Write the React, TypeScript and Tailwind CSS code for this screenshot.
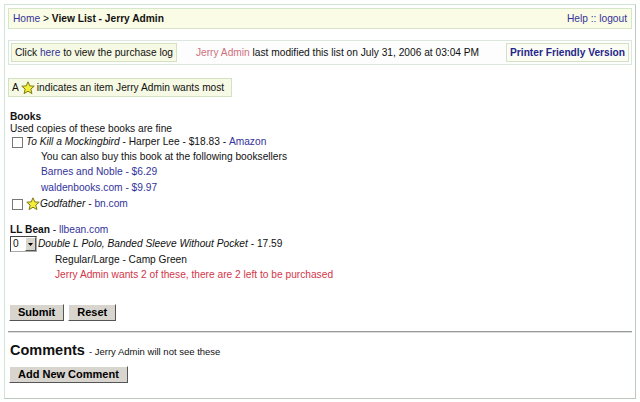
import React from "react";

function Star() {
  return (
    <svg width="14" height="14" viewBox="0 0 14 14" className="inline-block shrink-0">
      <path
        d="M7 0.8 L8.8 4.9 L13.2 5.2 L9.8 8.1 L10.9 12.6 L7 10.2 L3.1 12.6 L4.2 8.1 L0.8 5.2 L5.2 4.9 Z"
        fill="#f4ee3a"
        stroke="#7a7a10"
        strokeWidth="1"
        strokeLinejoin="round"
      />
    </svg>
  );
}

function Checkbox() {
  return <span className="inline-block w-[11px] h-[11px] border border-[#777] bg-white mr-[3px] shrink-0" />;
}

function Btn({ children }: { children: React.ReactNode }) {
  return (
    <button className="h-[17px] px-[8px] bg-[#d8d5cf] border border-t-white border-l-white border-r-[#555] border-b-[#555] font-bold text-[11px] leading-none text-black">
      {children}
    </button>
  );
}

export default function App() {
  const link = "text-[#33339a]";
  return (
    <div className="w-[640px] h-[402px] bg-white p-[4px] text-[10.2px] text-[#111] whitespace-nowrap" style={{ fontFamily: '"Liberation Sans", Arial, sans-serif' }}>
      <div className="h-[395px] border border-[#cfe6d6] border-r-[#bcc9bf] border-b-[#bcc9bf] px-[3px] pt-[3px]">
        {/* top bar */}
        <div className="h-[21px] flex items-center justify-between px-[4px] bg-[#fbfce5] border border-[#d6e6c8]">
          <div>
            <span className={link}>Home</span> &gt; <b>View List - Jerry Admin</b>
          </div>
          <div className={link}>Help :: logout</div>
        </div>

        {/* info bar */}
        <div className="mt-[11px] h-[25px] flex items-center justify-between px-[2px] border border-[#dbe6dc] bg-[#fcfdfc]">
          <div className="h-[19px] flex items-center px-[3px] bg-[#f6f9e3] border border-[#d3e2c3]">
            Click&nbsp;<span className={link}>here</span>&nbsp;to view the purchase log
          </div>
          <div className="mr-[8px]">
            <span className="text-[#d0707e]">Jerry Admin</span> last modified this list on July 31, 2006 at 03:04 PM
          </div>
          <div className="h-[19px] flex items-center px-[3px] bg-[#fbfdf5] border border-[#d3e2c3] font-bold text-[#25258a]">
            Printer Friendly Version
          </div>
        </div>

        {/* star note */}
        <div className="mt-[13px] w-[224px] h-[19px] flex items-center gap-[2px] px-[3px] bg-[#f6f9e3] border border-[#d3e2c3]">
          A <Star /> indicates an item Jerry Admin wants most
        </div>

        {/* books */}
        <div className="mt-[14px] pl-[2px]">
          <div className="h-[12px] flex items-center font-bold">Books</div>
          <div className="h-[12px] flex items-center">Used copies of these books are fine</div>
          <div className="h-[14px] flex items-center">
            <span className="ml-[2px] flex"><Checkbox /></span>
            <i>To Kill a Mockingbird</i>&nbsp;- Harper Lee - $18.83 -&nbsp;<span className={link}>Amazon</span>
          </div>
          <div className="pl-[31px]">
            <div className="h-[15px] flex items-center">You can also buy this book at the following booksellers</div>
            <div className={link + " h-[16px] flex items-center"}>Barnes and Noble - $6.29</div>
            <div className={link + " h-[15px] flex items-center"}>waldenbooks.com - $9.97</div>
          </div>
          <div className="h-[18px] flex items-center">
            <span className="ml-[2px] flex"><Checkbox /></span>
            <Star />
            <i>Godfather</i>&nbsp;-&nbsp;<span className={link}>bn.com</span>
          </div>
        </div>

        {/* LL Bean */}
        <div className="mt-[11px] pl-[2px]">
          <div className="h-[12px] flex items-center">
            <b>LL Bean</b>&nbsp;-&nbsp;<span className={link}>llbean.com</span>
          </div>
          <div className="h-[16px] flex items-center">
            <span className="w-[27px] h-[16px] flex items-stretch border border-[#444] border-r-[#aaa] border-b-[#aaa] bg-white mr-[1px]">
              <span className="flex-1 pl-[2px] leading-[14px]">0</span>
              <span className="w-[11px] bg-[#d8d5cf] border border-t-white border-l-white border-r-[#555] border-b-[#555] flex items-center justify-center">
                <svg width="5" height="3" viewBox="0 0 5 3"><path d="M0 0 H5 L2.5 3 Z" fill="#000" /></svg>
              </span>
            </span>
            <i>Double L Polo, Banded Sleeve Without Pocket</i>&nbsp;- 17.59
          </div>
          <div className="pl-[45px]">
            <div className="h-[15px] flex items-center">Regular/Large - Camp Green</div>
            <div className="h-[15px] flex items-center text-[#d2364a]">Jerry Admin wants 2 of these, there are 2 left to be purchased</div>
          </div>
        </div>

        {/* buttons */}
        <div className="mt-[22px] pl-[1px] flex gap-[4px]">
          <Btn>Submit</Btn>
          <Btn>Reset</Btn>
        </div>

        <div className="mt-[10px] h-[2px] border-t border-[#999] border-b border-b-[#ddd]" />

        <div className="mt-[7px] h-[18px] pl-[2px] flex items-baseline">
          <span className="text-[14.5px] font-bold">Comments</span>
          <span className="ml-[4px] text-[9.5px]">- Jerry Admin will not see these</span>
        </div>

        <div className="mt-[8px] pl-[1px]">
          <Btn>Add New Comment</Btn>
        </div>
      </div>
    </div>
  );
}
